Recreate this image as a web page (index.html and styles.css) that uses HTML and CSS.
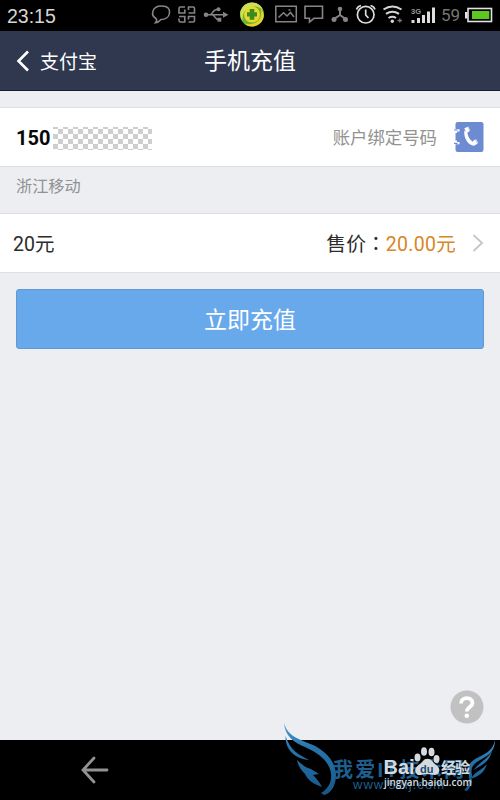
FILE: index.html
```html
<!DOCTYPE html>
<html lang="zh-CN">
<head>
<meta charset="utf-8">
<title>手机充值</title>
<link rel="stylesheet" href="styles.css">
</head>
<body>
<div class="screen">
  <div class="status">
    <span class="time">23:15</span>
    <div class="status-icons">
      <svg width="26" height="31" viewBox="149 0 26 31" fill="none" stroke="#858585" stroke-width="1.6"><path d="M156 18.500C150.500 15.500 151.500 6 161.500 6C168 6 170 9 169.500 13C169 17.500 165 19.500 161 19.500Q158.500 22.500 155.500 22.800Q157.500 20.500 156 18.500Z"/></svg>
      <svg width="26" height="31" viewBox="175 0 26 31" fill="none" stroke="#858585" stroke-width="1.6"><path d="M185 7H180.500Q179 7 179 8.500V13H184.800V9.500M188.500 10V7H193Q194.500 7 194.500 8.500V13H188.500M179 16.500H184.800V22H180.500Q179 22 179 20.500V18.500M188.500 19.500V16.500H194.500V20.500Q194.500 22 193 22H188.500"/></svg>
      <svg width="36" height="31" viewBox="201 0 36 31" fill="none" stroke="#858585" stroke-width="1.5"><path d="M206 14.800H224M209.500 14.800C213 14.800 212 9.200 218 9.200M212 14.800C215 14.800 214.500 19.700 219 19.700"/><g fill="#858585" stroke="none"><circle cx="206" cy="14.800" r="2.300"/><path d="M223 11.800L228.500 14.800L223 17.800Z"/><circle cx="218.500" cy="9.200" r="2"/><path d="M217.500 17.800H221.300V21.700H217.500Z"/></g></svg>
      <svg width="34" height="31" viewBox="237 0 34 31"><circle cx="252" cy="14.500" r="12" fill="#6fb52c"/><path d="M240.500 11A12 12 0 0 1 263.500 11Q259 5 251 7Q242 9 242.500 21Q239.500 17 240.500 11Z" fill="#cfdf55"/><path d="M263.800 16A12 12 0 0 1 244 23.500Q254 26 259 20Q262 16 261 9Q264 12 263.800 16Z" fill="#e9cf2d"/><circle cx="252" cy="14.500" r="8" fill="#e9d832"/><path d="M249.700 9H254.300V12.300H257V16.500H254.300V19.800H249.700V16.500H247V12.300H249.700Z" fill="#398b20"/></svg>
      <svg width="30" height="31" viewBox="271 0 30 31" fill="none" stroke="#858585" stroke-width="1.500"><path d="M275.800 6.300H296.300V21.700H275.800ZM278.500 17.500L283.500 12.800L287 16L290.500 12.500L294 17"/><path d="M288.500 10H290.500"/></svg>
      <svg width="27" height="31" viewBox="301 0 27 31" fill="none" stroke="#858585" stroke-width="1.600"><path d="M305 6.300H322.500V18.300H314L309.500 22V18.300H305Z"/></svg>
      <svg width="24" height="31" viewBox="328 0 24 31" fill="none" stroke="#858585" stroke-width="2"><path d="M340 10V15L334 19M340 15L345.500 19"/><g fill="#858585" stroke="none"><circle cx="340" cy="9" r="2.300"/><circle cx="334" cy="19.500" r="2.500"/><circle cx="345.500" cy="19.500" r="2.500"/></g></svg>
      <svg width="28" height="31" viewBox="352 0 28 31" fill="none" stroke="#dedede" stroke-width="1.700"><circle cx="365.700" cy="14.700" r="8.300"/><path d="M365.700 9.500V15L368.500 18M356.500 9.500Q357.500 6.300 361 5.500M375 9.500Q374 6.300 370.500 5.500"/></svg>
      <svg width="28" height="31" viewBox="380 0 28 31" fill="none" stroke="#d5d5d5" stroke-width="2"><path d="M383.500 9.500Q392.500 3.500 401.500 9.500M386 13.800Q392.500 9.500 399 13.800M388.500 18Q392.500 15.500 396 18"/><circle cx="392.300" cy="21.300" r="1.700" fill="#d5d5d5" stroke="none"/><path d="M397.500 20.500H402M399.800 18.500V22.500" stroke="#777" stroke-width="1.400"/></svg>
      <svg width="30" height="31" viewBox="408 0 30 31"><path d="M411.500 20H414.500V23H411.500ZM417 18H420V23H417ZM422 15H425V23H422ZM427 11.500H430V23H427ZM432 7.500H435V23H432Z" fill="#dedede"/><text x="411" y="14" class="net" textLength="10" lengthAdjust="spacingAndGlyphs">3G</text></svg>
    </div>
    <span class="percent">59</span>
    <svg width="30" height="31" viewBox="464 0 30 31"><rect x="468" y="8.500" width="23.500" height="13" fill="none" stroke="#e2e2e2" stroke-width="1.600"/><path d="M465 12H467.500V18.500H465Z" fill="#e2e2e2"/><path d="M472 11H489.300V19H472Z" fill="#5ec71d"/></svg>
  </div>

  <header class="bar">
    <div class="back">
      <svg width="14" height="22" viewBox="0 0 14 22" fill="none" stroke="#fff" stroke-width="2.600"><path d="M12 1.500L2.500 11L12 20.500"/></svg>
      <span>支付宝</span>
    </div>
    <h1>手机充值</h1>
  </header>

  <main>
    <section class="row phone">
      <b>150</b><i class="mask"></i>
      <span class="hint">账户绑定号码</span>
      <svg width="30" height="30" viewBox="0 0 30 30"><rect x="1.500" width="28" height="30" rx="2.200" fill="#6d8bd0"/><path d="M0 7.300H5.500V9.500H3V11H0ZM0 18.500H3V20H5.500V22.200H0Z" fill="#fff"/><path d="M0 8H3.500M0 21.300H3.500" stroke="#6d8bd0" stroke-width="1.200"/><path d="M10.300 8.500C9.500 16 14 23.500 20 23.800L21 20.800C17 19.500 13.300 14.500 13.500 10.500Z" fill="#fff"/><path d="M10.300 6.300L14.500 4.600L16.300 8.800L12.500 11ZM18.800 19L22 17L24.300 21.300L20 23.800Z" fill="#fff"/><path d="M13.800 4.500L16.500 10M21 17L24 22.500" stroke="#6d8bd0" stroke-width=".5"/></svg>
    </section>
    <p class="carrier">浙江移动</p>
    <section class="row amount">
      <span class="value">20元</span>
      <span class="label">售价<span class="colon" lang="zh-TW">：</span></span><span class="price">20.00元</span>
      <svg width="12" height="18" viewBox="0 0 12 18" fill="none" stroke="#c6c6c8" stroke-width="1.800"><path d="M1.500 1L10 9L1.500 17"/></svg>
    </section>
    <button class="submit">立即充值</button>
    <div class="help">
      <svg width="34" height="34" viewBox="0 0 34 34"><circle cx="17" cy="17" r="16.500" fill="#c1c1c2"/><path d="M11 13.500C11 6.500 22.500 6.500 22.500 13C22.500 17 16.800 17 16.800 21.500" fill="none" stroke="#fff" stroke-width="3.800"/><circle cx="16.800" cy="25.800" r="2.300" fill="#fff"/></svg>
    </div>
  </main>

  <footer class="nav">
    <svg width="28" height="28" viewBox="0 0 28 28" fill="none" stroke="#929292" stroke-width="2.800" stroke-linecap="round"><path d="M13 2L2 14L13 26M2.500 14H26"/></svg>
  </footer>

  <svg class="watermark" width="220" height="80" viewBox="280 720 220 80">
    <defs>
      <linearGradient id="wing" x1="0" y1="0" x2="0" y2="1"><stop offset="0" stop-color="#4d9fd2"/><stop offset=".35" stop-color="#2774ac"/><stop offset="1" stop-color="#165788"/></linearGradient>
    </defs>
    <g fill="url(#wing)">
      <path d="M284 723C288 737 299 739 313 745C328 752 336 764 336 775C336 785 331 794 324 795L321 793C329 788 332 781 331 773C329 762 320 754 307 748C293 742 285 736 284 723ZM285.500 736C290 750 299 755 309 760C296 759 285 750 285.500 736ZM297 760C301 764 306 768 311 769L319 774L313 775C317 779 320 783 322 787C313 784 308 780 305 774C301 770 298 766 297 760Z"/>
      <path d="M495 740C493 750 487 753 479 757C470 761 466 766 469 776C470 782 468 787 464 790L467 791C473 785 472 779 472 775C470 767 474 763 482 759C491 754 495 749 495 740ZM492 751C489 763 481 765 474 770C479 762 487 760 492 751ZM487 764C484 773 479 776 471 779C475 771 481 771 487 764Z"/>
    </g>
    <text class="mark-name" x="333" y="777" textLength="131">我爱IT技术网</text>
    <text class="mark-url" x="353" y="789" textLength="91">www.52ij.com</text>
    <g fill="#d6dade">
      <text class="baidu-name" x="383.500" y="774" textLength="31" lengthAdjust="spacingAndGlyphs">Bai</text>
      <path d="M416 773C413 767 420 765 423 761C425 758 430 758 432 761C435 765 441 767 439 772C437 777 432 774 427 774C422 774 418 777 416 773Z"/>
      <ellipse cx="417.500" cy="757.500" rx="3" ry="4"/><ellipse cx="424" cy="751.500" rx="3" ry="4.300"/><ellipse cx="431.500" cy="752" rx="3" ry="4.300"/><ellipse cx="436.500" cy="759" rx="3" ry="4"/>
      <text class="baidu-du" x="420" y="773">du</text>
      <text class="baidu-cn" x="441" y="773" textLength="29">经验</text>
      <text class="baidu-url" x="384" y="786" textLength="88" lengthAdjust="spacingAndGlyphs">jingyan.baidu.com</text>
    </g>
  </svg>
</div>
</body>
</html>
```

FILE: styles.css
```css
* { box-sizing: border-box; }
body { margin: 0; font-family: Roboto, "Noto Sans CJK SC", sans-serif; }
svg { display: block; flex: none; }
.screen { position: relative; width: 500px; height: 800px; display: flex; flex-direction: column; overflow: hidden; background: #edeef2; }
.status { height: 31px; background: #000; display: flex; align-items: center; color: #d6d6d6; }
.time { width: 149px; padding: 2px 0 0 7px; font: 19.500px/29px "Liberation Sans", sans-serif; }
.status-icons { display: flex; }
.net { font: bold 8px "Liberation Sans", sans-serif; fill: #999; }
.percent { width: 26px; padding-left: 3px; font-size: 17px; line-height: 31px; color: #777; }
.bar { height: 60px; background: #303850; border-bottom: 1px solid #191e33; color: #fff; display: grid; grid-template-columns: 1fr auto 1fr; align-items: center; }
.back { display: flex; align-items: center; gap: 10px; padding-left: 16px; font-size: 19px; line-height: 28px; }
.back span { padding-top: 4px; }
.bar h1 { margin: 0; padding-top: 3px; font-size: 23px; font-weight: 400; line-height: 34px; }
main { height: 649px; padding-top: 16px; display: flex; flex-direction: column; }
.row { height: 60px; display: flex; align-items: center; background: #fff; border: solid #dedfe2; border-width: 1px 0; }
.phone { padding: 0 16px; }
.phone b { padding-top: 2px; font-size: 20px; font-weight: 700; width: 37px; color: #080808; }
.mask { width: 99px; height: 23px; margin-top: 2px; background: repeating-conic-gradient(#cecece 0 25%, #fff 0 50%) 0 2px / 10px 10px; }
.hint { margin-left: auto; margin-right: 17px; padding-bottom: 2px; font-size: 17.400px; color: #929292; }
.carrier { margin: 0; height: 46px; padding: 7px 16px 0; font-size: 16.200px; line-height: 26px; color: #929292; }
.amount { padding: 0 16px 0 13px; font-size: 20px; color: #2c2c2c; }
.amount > span { padding-bottom: 2px; }
.value { font-size: 19.500px; }
.label { margin-left: auto; font-size: 19.800px; }
.colon { font-family: "Noto Sans CJK TC", sans-serif; }
.price { margin-right: 16px; color: #d88626; font-size: 19.500px; letter-spacing: .3px; }
.submit { flex: none; height: 60px; margin: 16px 16px 0; padding: 0 0 3px; border: 1px solid #6299d3; border-radius: 3px; background: #68a9ec; color: #fff; font: 23px "Noto Sans CJK SC", sans-serif; }
.help { margin: auto 16px 16px auto; }
.nav { height: 60px; padding: 0 81px; display: flex; align-items: center; background: #000; }
.watermark { position: absolute; right: 0; bottom: 0; }
.mark-name { font: bold 20px "Liberation Sans", "Noto Sans CJK SC", sans-serif; fill: #1d5f91; }
.mark-url { font: 13px "Liberation Sans", sans-serif; fill: #1d5f91; }
.baidu-name { font: bold 20px "Liberation Sans", sans-serif; }
.baidu-du { font: bold 11px "Liberation Sans", sans-serif; fill: #174c74; }
.baidu-cn { font: bold 15px "Noto Sans CJK SC", sans-serif; }
.baidu-url { font: 600 11.500px "Open Sans", sans-serif; }
```
